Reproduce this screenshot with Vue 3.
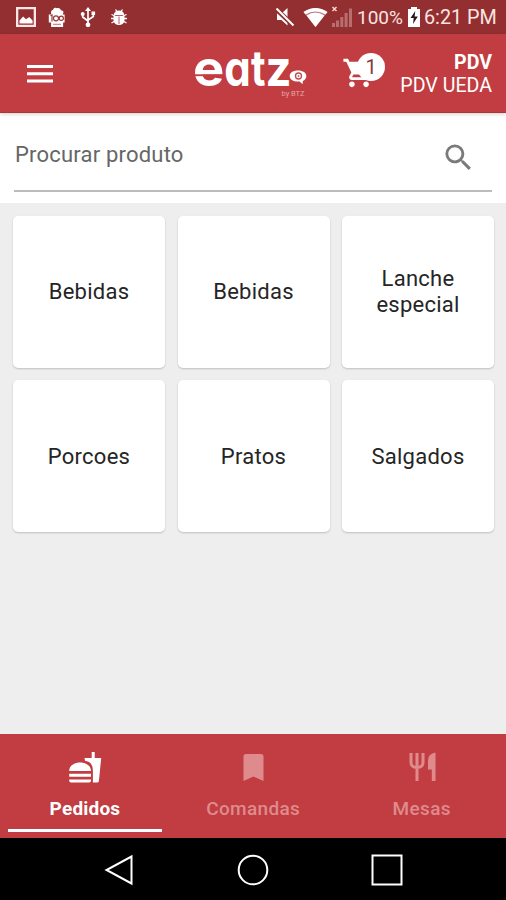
<script setup>
const categories = ['Bebidas', 'Bebidas', 'Lanche especial', 'Porcoes', 'Pratos', 'Salgados']
const tabs = [
  { label: 'Pedidos', icon: 'food' },
  { label: 'Comandas', icon: 'bookmark' },
  { label: 'Mesas', icon: 'cutlery' },
]
</script>

<template>
  <div class="screen">
    <div class="status">
      <svg class="notices" viewBox="0 0 140 34">
        <path fill="#fbe8e6" fill-rule="evenodd" d="M16 7h20v20H16zM18.3 9.3v15.4h15.4V9.3z" />
        <path fill="#fff" d="M19.5 23.5v-3l3.6-4 3 2.8 3.1-2.2 3.4 3.4v3z" />
        <path fill="#fff" d="M51 12.500c0-2 1.300-2.500 2-2.500.5-2 2.500-2.700 3.500-1.700 2-.7 4 0 4.300 1.900 2 0 2.900 1.300 2.600 2.500l-.8 1.800h2v8h-1.500v4.500h-12v-4.500h-2.300v-8h2.500z" />
        <g fill="none" stroke="#98383a" stroke-width="1.200">
          <path d="M50.500 15.800l1.500-.8v6.500" /><circle cx="56" cy="18.300" r="2.500" /><circle cx="61.300" cy="18.300" r="2.100" />
          <path d="M53 24.300h8" stroke-width=".7" />
        </g>
        <path fill="none" stroke="#fff" stroke-width="1.700" d="M88 10v14M88 21l-5.300-4v-3M88 20l5.300-3.500V13" />
        <path fill="#fff" d="M88 7l3 4h-6zM91.500 11.500h3.600v3.600h-3.600z" />
        <circle cx="88" cy="24.800" r="2.400" fill="#fff" /><circle cx="82.700" cy="14" r="2" fill="#fff" />
        <path fill="#fff" d="M113.800 15a5.200 4.500 0 0 1 10.400 0zM113.500 15.800h11v4.500a5.500 4.800 0 0 1-11 0z" />
        <path stroke="#fff" stroke-width="1.300" d="M115.500 9.500l2 3M122.500 9.500l-2 3M111.500 14.500l3.500 1.500M111 18.500h4M111.500 23l3.500-2M126.500 14.500l-3.500 1.500M127 18.500h-4M126.500 23l-3.500-2" />
        <path stroke="#a34d4e" stroke-width=".9" d="M119 16.500v7.500" />
      </svg>
      <div class="system">
        <svg class="signals" viewBox="0 0 82 34">
          <path fill="#fff" d="M2 13.500h4.500l6-5.500v17.500L6.500 20H2z" />
          <path stroke="#932f31" stroke-width="4.500" d="M1 9l18 17" />
          <path stroke="#fff" stroke-width="1.900" d="M1.500 8.500l17 17" />
          <path fill="#bd7476" d="M28.500 12q12-8 24 0L40.500 27z" />
          <path fill="#fff" d="M31.500 15.500q9-6 18 0L40.500 27z" />
          <path fill="#fff" d="M28.500 12q12-8 24 0l-2 2.500q-10-6-20 0z" />
          <g fill="#b86d6f"><path d="M57 23h3v4h-3zM61 20.500h3V27h-3zM65.300 17h3v10h-3zM69.600 13h3v14h-3zM74 8.500h3V27h-3z" /></g>
          <path stroke="#fbd5c8" stroke-width="1.500" d="M57.500 7l4 4M61.500 7l-4 4" />
        </svg>
        <span class="percent">100%</span>
        <svg class="battery" viewBox="0 0 14 34">
          <path fill="#fff" d="M1 9h3V7h6v2h3v18H1z" /><path fill="#281719" d="M8.300 11L3.500 18h3.200l-.7 6 4.800-7.500H7.600z" />
        </svg>
        <span class="clock">6:21 PM</span>
      </div>
    </div>

    <header class="toolbar">
      <svg class="menu" viewBox="0 0 28 20"><path fill="#fff" d="M1 1h26v3H1zM1 8.200h26v3H1zM1 15.400h26v3H1z" /></svg>
      <svg class="logo" viewBox="0 0 116 52">
        <g class="wordmark">
          <text x="0" y="38.500" textLength="31.300" lengthAdjust="spacingAndGlyphs">e</text>
          <text x="31.300" y="38.500" textLength="26.500" lengthAdjust="spacingAndGlyphs">a</text>
          <text x="58" y="38.500" textLength="14.500" lengthAdjust="spacingAndGlyphs">t</text>
          <text x="72.500" y="38.500" textLength="26" lengthAdjust="spacingAndGlyphs">z</text>
        </g>
        <path fill="#c13d41" d="M0 27.300h31v1.900H0z" />
        <path fill="#fff" d="M105 23.500c5 0 8.300 2.300 8.300 5.400 0 2.400-1.500 4.200-3.500 5l-.2 3.400-3-2.800c-6 .5-9.900-2-9.900-5.500 0-3.300 3.400-5.500 8.300-5.500z" />
        <circle cx="105.500" cy="29" r="3" fill="none" stroke="#b74d50" stroke-width="1.300" />
        <path d="M104.700 28.300h1.600v1.600h-1.600z" fill="#b74d50" />
        <text class="byline" x="88.500" y="48.500" textLength="23" lengthAdjust="spacingAndGlyphs">by BTZ</text>
      </svg>
      <div class="cart">
        <svg viewBox="0 0 24 24" fill="#fff"><path d="M7 18c-1.100 0-1.990.9-1.990 2S5.900 22 7 22s2-.9 2-2-.9-2-2-2zM1 2v2h2l3.600 7.590-1.350 2.450c-.16.280-.25.610-.25.960 0 1.100.9 2 2 2h12v-2H7.420c-.14 0-.25-.11-.25-.25l.03-.12.900-1.630h7.450c.75 0 1.410-.41 1.750-1.030l3.580-6.490A1 1 0 0 0 20 4H5.210l-.94-2H1zm16 16c-1.100 0-1.990.9-1.990 2s.89 2 1.990 2 2-.9 2-2-.9-2-2-2z" /></svg>
        <span class="badge">1</span>
      </div>
      <div class="account"><strong>PDV</strong><span>PDV UEDA</span></div>
    </header>

    <section class="search">
      <div class="field">
        <span>Procurar produto</span>
        <svg viewBox="0 0 24 24"><path fill="#7a7a7a" d="M15.500 14h-.79l-.28-.27A6.470 6.470 0 0 0 16 9.500 6.500 6.500 0 1 0 9.500 16c1.610 0 3.090-.59 4.230-1.570l.27.280v.79l5 4.990L20.490 19l-4.990-5zm-6 0C7.010 14 5 11.990 5 9.500S7.010 5 9.500 5 14 7.010 14 9.500 11.990 14 9.500 14z" /></svg>
      </div>
    </section>

    <main class="grid">
      <div v-for="(name, i) in categories" :key="i" class="card">{{ name }}</div>
    </main>

    <nav class="tabs">
      <div v-for="(tab, i) in tabs" :key="tab.label" class="tab" :class="{ active: i === 0 }">
        <svg v-if="tab.icon === 'food'" viewBox="0 0 34 34" fill="currentColor">
          <path d="M16.500 8h7.200V2h3v6h6.500l-2.300 23q-.2 1.600-1.800 1.600h-4.200V20.500C24.900 14.500 22 11.500 17 10.800z" />
          <path d="M1.200 21C1.200 9.500 23 9.500 23 21zM1.200 23.800H23v3H1.200zM1.200 29.500H23v1.300q0 1.800-1.800 1.800H3q-1.800 0-1.800-1.800z" />
        </svg>
        <svg v-else-if="tab.icon === 'bookmark'" viewBox="0 0 34 34" fill="currentColor">
          <path d="M10 4h15q2.500 0 2.500 2.500V31l-10-4.500L7.500 31V6.500Q7.500 4 10 4z" />
        </svg>
        <svg v-else viewBox="0 0 34 34">
          <path fill="none" stroke="currentColor" stroke-width="3" d="M6 3v9.500q0 5 6 5t6-5V3M12 3v28" />
          <path fill="currentColor" d="M30.500 2.500v28.500h-3.700V19.500H23V10q0-6 7.500-7.500z" />
        </svg>
        <span>{{ tab.label }}</span>
      </div>
    </nav>

    <div class="keys">
      <svg viewBox="0 0 32 32"><path d="M28.500 2.500v27L3.500 16z" /></svg>
      <svg viewBox="0 0 32 32"><circle cx="16" cy="16" r="14.300" /></svg>
      <svg viewBox="0 0 32 32"><path d="M1.500 1.500h29v29h-29z" /></svg>
    </div>
  </div>
</template>

<style>
body { margin: 0; overflow: hidden; }
</style>

<style scoped>
.screen { width: 506px; height: 900px; display: flex; flex-direction: column; background: #eee; font-family: Roboto, "Liberation Sans", sans-serif; box-sizing: border-box; }
.screen * { box-sizing: border-box; }
svg { display: block; flex: none; }
.status { height: 34px; flex: none; background: #932f31; display: flex; justify-content: space-between; color: #fbe5e1; font-size: 20px; line-height: 36px; }
.notices { width: 140px; height: 34px; }
.system { display: flex; width: 231px; white-space: nowrap; }
.signals { width: 82px; height: 34px; }
.percent { width: 50px; font-size: 19px; }
.battery { width: 14px; height: 34px; }
.clock { margin-left: 3px; font-size: 19.800px; }
.toolbar { height: 79px; flex: none; background: #c13d41; border-bottom: 1px solid #ae3438; box-shadow: 0 1px 4px #0003; position: relative; display: flex; align-items: center; padding: 0 14px 0 26px; }
.menu { width: 28px; height: 20px; margin-top: 2px; }
.logo { width: 116px; height: 52px; margin: 0 34px 0 139px; overflow: visible; }
.wordmark { font-family: Inter, sans-serif; font-weight: 700; font-size: 50px; font-feature-settings: "cv11"; fill: #fff; }
.byline { font-size: 7px; fill: #e6a4a4; }
.cart { width: 44px; height: 40px; position: relative; }
.cart svg { width: 34px; height: 36px; margin-top: 2px; margin-left: -1px; }
.badge { position: absolute; left: 14px; top: 0; width: 28px; height: 28px; border-radius: 50%; background: #fff; color: #873b3d; font-size: 20px; line-height: 29px; text-align: center; }
.account { margin-left: auto; margin-top: 1px; color: #fff; display: flex; flex-direction: column; align-items: flex-end; font-size: 19.600px; line-height: 23px; white-space: nowrap; }
.search { height: 90px; flex: none; background: #fff; padding: 2px 14px 0; }
.field { height: 77px; border-bottom: 2px solid #bcbcbc; display: flex; align-items: center; justify-content: space-between; padding: 4px 16px 0 1px; color: #666; font-size: 22px; letter-spacing: .2px; }
.field svg { width: 35px; height: 35px; margin-top: 6px; }
.grid { flex: 1; display: grid; grid-template-columns: repeat(3, 152px); grid-auto-rows: 152px; gap: 12.500px; align-content: start; padding: 12.500px 13px; }
.card { display: flex; align-items: center; justify-content: center; text-align: center; padding: 1px 25px 0; background: #fff; border-radius: 5px; box-shadow: 0 1px 2px #0003; color: #252525; font-size: 22px; line-height: 26px; letter-spacing: .25px; }
.tabs { height: 104px; flex: none; display: flex; background: #c13d41; padding: 0 0 6px; }
.tab { width: 168.670px; display: flex; flex-direction: column; align-items: center; padding-top: 16px; color: #df8b8d; font-size: 19px; font-weight: 500; letter-spacing: .35px; }
.tab svg { width: 34px; height: 34px; }
.tab span { margin-top: 13px; line-height: 24px; }
.tab.active { width: 154px; margin: 0 7px 0 8px; border-bottom: 3px solid #fff; color: #fff; font-weight: 700; letter-spacing: .2px; }
.keys { height: 62px; flex: none; background: #000; display: flex; align-items: center; justify-content: center; gap: 102px; padding-top: 1px; }
.keys svg { width: 32px; height: 32px; fill: none; stroke: #fff; stroke-width: 2; }
</style>
